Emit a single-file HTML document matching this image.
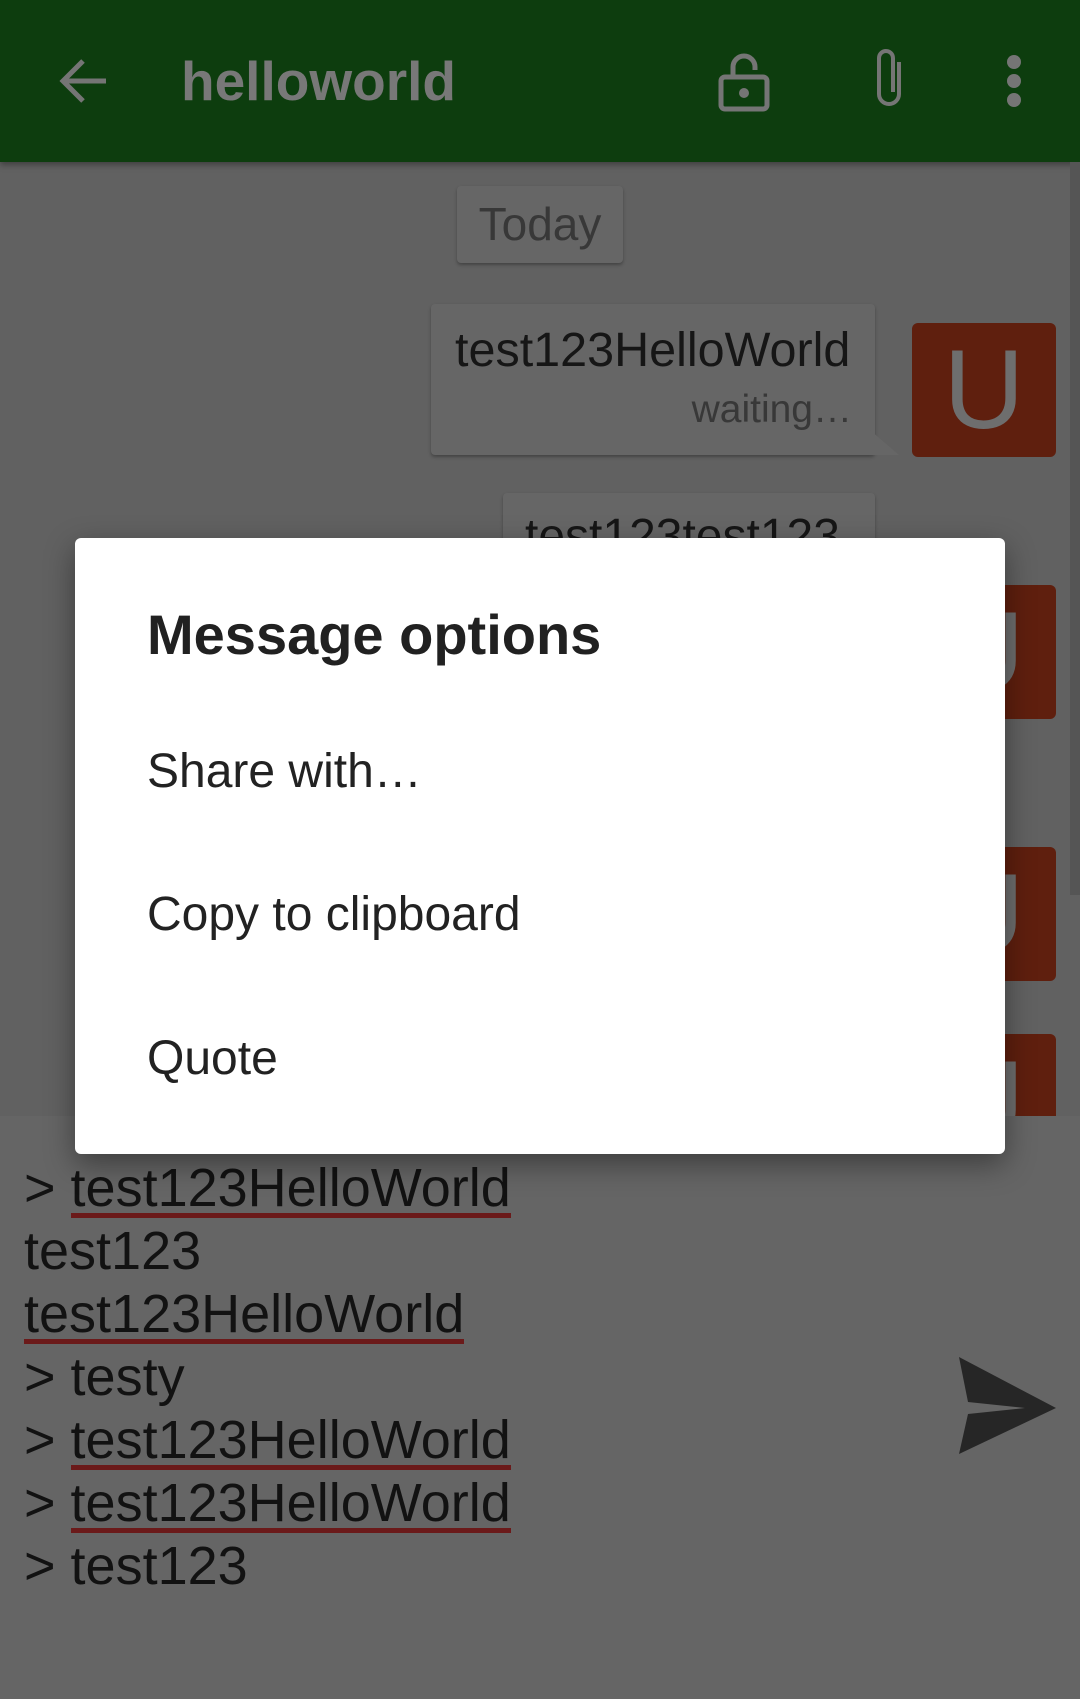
<!DOCTYPE html>
<html><head><meta charset="utf-8"><style>
*{margin:0;padding:0;box-sizing:border-box}
body{width:1080px;height:1699px;overflow:hidden;background:#616161;font-family:"Liberation Sans",sans-serif;position:relative}
.abs{position:absolute}
.tb{left:0;top:0;width:1080px;height:162px;background:#0d3d0e;box-shadow:0 3px 6px rgba(0,0,0,.35)}
.title{left:181px;top:46px;font-size:55px;font-weight:bold;color:#787878;line-height:70px}
.chip{left:457px;top:186px;width:166px;height:77px;background:#666;border-radius:4px;box-shadow:0 2px 3px rgba(0,0,0,.3);font-size:46px;color:#383838;text-align:center;line-height:77px}
.bub{background:#666;border-radius:4px;box-shadow:0 2px 3px rgba(0,0,0,.3)}
.av{background:#5f1f0e;border-radius:6px;color:#6e6e6e;font-size:112px;text-align:center;overflow:hidden}
.dlg{left:75px;top:538px;width:930px;height:616px;background:#fff;border-radius:6px;box-shadow:0 10px 30px rgba(0,0,0,.4)}
.dlg div{position:absolute;left:72px;color:#222}
.inp{left:0;top:1116px;width:1080px;height:583px;background:#656565}
.lines{left:24px;top:1157px;font-size:54px;line-height:63px;color:#121212}
.u{border-bottom:5px solid #6b1a1a;display:inline-block;line-height:50px}
</style></head><body>
<div class="abs tb"></div>
<svg class="abs" style="left:56px;top:56px" width="56" height="50" viewBox="0 0 56 50"><path d="M50 25H8M27 5L7 25l20 20" stroke="#757575" stroke-width="5" fill="none"/></svg>
<div class="abs title">helloworld</div>
<svg class="abs" style="left:718px;top:52px" width="54" height="60" viewBox="0 0 54 60"><rect x="3" y="25" width="46" height="32" rx="4" stroke="#757575" stroke-width="5" fill="none"/><path d="M15 25V15a11 11 0 0 1 22 0v3" stroke="#757575" stroke-width="5" fill="none"/><circle cx="26" cy="41" r="5" fill="#757575"/></svg>
<svg class="abs" style="left:868px;top:44px" width="44" height="68" viewBox="0 0 44 68"><path d="M31 18v32a10 10 0 0 1-20 0V14a7 7 0 0 1 14 0v34" stroke="#757575" stroke-width="4" fill="none"/></svg>
<svg class="abs" style="left:1000px;top:54px" width="28" height="54"><circle cx="14" cy="8" r="7" fill="#757575"/><circle cx="14" cy="27" r="7" fill="#757575"/><circle cx="14" cy="46" r="7" fill="#757575"/></svg>
<div class="abs" style="left:1070px;top:162px;width:10px;height:733px;background:#555"></div>
<div class="abs chip">Today</div>
<div class="abs bub" style="left:431px;top:304px;width:444px;height:151px"></div>
<svg class="abs" style="left:870px;top:430px" width="30" height="26"><path d="M0 0L29 25H0Z" fill="#666"/></svg>
<div class="abs" style="left:455px;top:322px;font-size:48.5px;color:#161616">test123HelloWorld</div>
<div class="abs" style="left:600px;top:388px;width:252px;text-align:right;font-size:39px;color:#383838">waiting…</div>
<div class="abs av" style="left:912px;top:323px;width:144px;height:134px;line-height:134px">U</div>
<div class="abs bub" style="left:503px;top:493px;width:372px;height:120px;overflow:hidden"><div style="padding:16px 0 0 22px;font-size:48px;color:#161616">test123test123</div></div>
<div class="abs av" style="left:912px;top:585px;width:144px;height:134px;line-height:134px">U</div>
<div class="abs av" style="left:912px;top:847px;width:144px;height:134px;line-height:134px">U</div>
<div class="abs av" style="left:912px;top:1034px;width:144px;height:134px;line-height:134px">U</div>
<div class="abs inp"></div>
<div class="abs lines">
&gt; <span class="u">test123HelloWorld</span><br>
test123<br>
<span class="u">test123HelloWorld</span><br>
&gt; testy<br>
&gt; <span class="u">test123HelloWorld</span><br>
&gt; <span class="u">test123HelloWorld</span><br>
&gt; test123
</div>
<svg class="abs" style="left:958px;top:1356px" width="100" height="100" viewBox="0 0 100 100"><path d="M1 1L98 52L1 98L10 58L67 52L10 46Z" fill="#262626"/></svg>
<div class="abs dlg">
<div style="top:64px;font-size:56px;font-weight:bold;color:#212121">Message options</div>
<div style="top:206px;font-size:48px">Share with…</div>
<div style="top:349px;font-size:48px">Copy to clipboard</div>
<div style="top:493px;font-size:48px">Quote</div>
</div>
</body></html>
